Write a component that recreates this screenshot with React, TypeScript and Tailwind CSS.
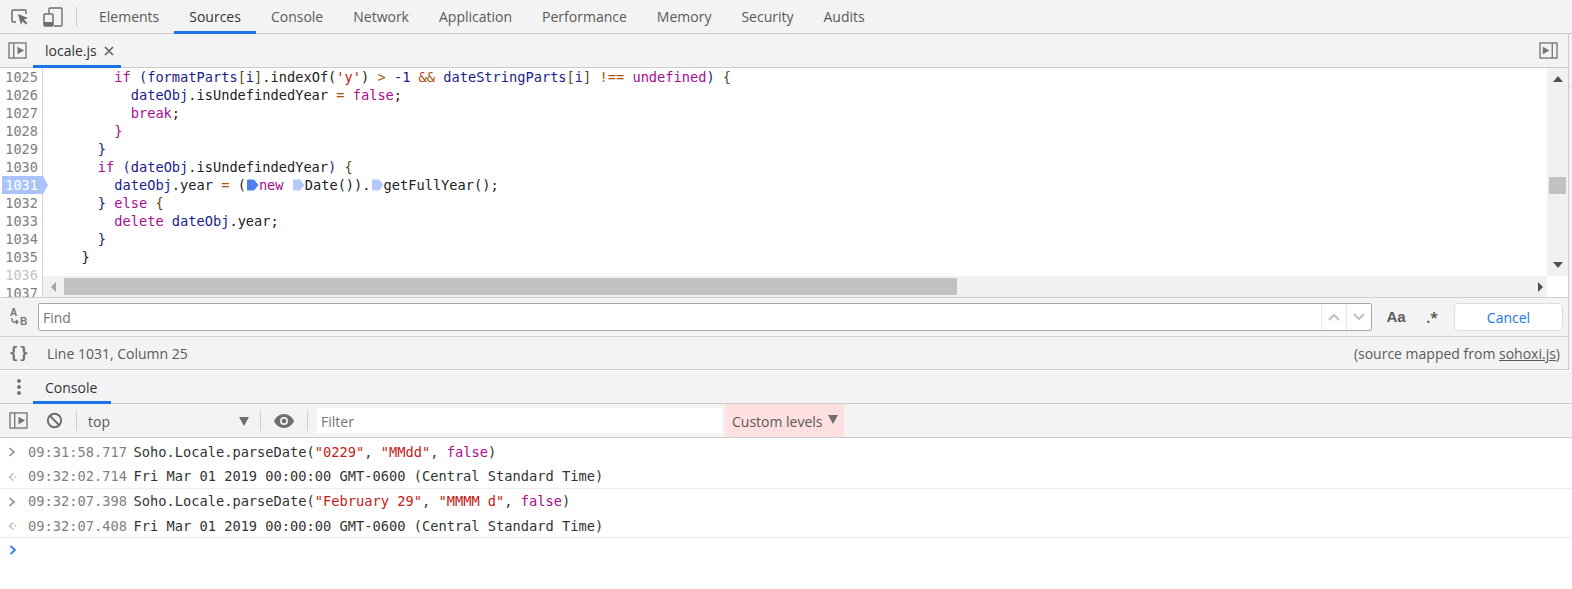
import type { ReactNode } from "react";

const SANS = "font-['Open_Sans',sans-serif]";
const MONO = "font-['DejaVu_Sans_Mono',monospace]";

const KW = "text-[#aa0d91]";
const VAR = "text-[#1c1c8c]";
const OP = "text-[#a8540e]";
const STR = "text-[#c41a16]";
const NUM = "text-[#1c1c8c]";
const PROP = "text-[#222222]";
const BR = "text-[#5c4a1e]";

function SidebarIcon({ flip }: { flip?: boolean }) {
  return (
    <svg width="19" height="17" viewBox="0 0 20 18" className="shrink-0">
      <rect x="1" y="1" width="18" height="16" fill="none" stroke="#757575" strokeWidth="1.4" />
      {flip ? (
        <>
          <line x1="14" y1="1" x2="14" y2="17" stroke="#757575" strokeWidth="1.4" />
          <path d="M4 5l7 4-7 4z" fill="#757575" />
        </>
      ) : (
        <>
          <line x1="6" y1="1" x2="6" y2="17" stroke="#757575" strokeWidth="1.4" />
          <path d="M10 5l7 4-7 4z" fill="#757575" />
        </>
      )}
    </svg>
  );
}

function InspectIcon() {
  return (
    <svg width="18" height="18" viewBox="0 0 18 18" className="shrink-0">
      <path d="M5 14H2a1 1 0 0 1-1-1V3a1 1 0 0 1 1-1h12a1 1 0 0 1 1 1v3" fill="none" stroke="#6e6e6e" strokeWidth="1.5" />
      <path d="M7 6l10 4-4 1.6 3.4 3.4-1.6 1.6-3.4-3.4L10 17z" fill="#6e6e6e" />
    </svg>
  );
}

function DeviceIcon() {
  return (
    <svg width="20" height="20" viewBox="0 0 20 20" className="shrink-0">
      <path d="M6 6V2a1 1 0 0 1 1-1h11a1 1 0 0 1 1 1v16a1 1 0 0 1-1 1h-7" fill="none" stroke="#6e6e6e" strokeWidth="1.4" />
      <rect x="1" y="7" width="9" height="12" rx="1" fill="none" stroke="#6e6e6e" strokeWidth="1.5" />
      <rect x="1" y="15" width="9" height="4" fill="#6e6e6e" />
    </svg>
  );
}

function Sep() {
  return <div className="w-px h-[20px] bg-[#cccccc] shrink-0" />;
}

function Marker({ dark }: { dark?: boolean }) {
  const fill = dark ? "#4f7df0" : "#b5c8fb";
  return (
    <svg width="13" height="12" viewBox="0 0 13 12" className="inline-block align-[-1px]">
      <path d="M1 1.5a1 1 0 0 1 1-1h6l4.500 5.500L8 11.500H2a1 1 0 0 1-1-1z" fill={fill} />
    </svg>
  );
}

const NAV_TABS = ["Elements", "Sources", "Console", "Network", "Application", "Performance", "Memory", "Security", "Audits"];

const CODE_LINES: { num: number; indent: number; tokens: ReactNode[] }[] = [
  {
    num: 1025,
    indent: 8,
    tokens: [
      <span key="a" className={KW}>if</span>,
      <span key="b" className={VAR}> (formatParts</span>,
      <span key="c" className={BR}>[</span>,
      <span key="d" className={VAR}>i</span>,
      <span key="e" className={BR}>]</span>,
      <span key="f" className={PROP}>.indexOf(</span>,
      <span key="g" className={STR}>'y'</span>,
      <span key="h" className={PROP}>) </span>,
      <span key="i" className={OP}>&gt;</span>,
      <span key="j" className={NUM}> -1 </span>,
      <span key="k" className={OP}>&amp;&amp;</span>,
      <span key="l" className={VAR}> dateStringParts</span>,
      <span key="m" className={BR}>[</span>,
      <span key="n" className={VAR}>i</span>,
      <span key="o" className={BR}>]</span>,
      <span key="p" className={OP}> !==</span>,
      <span key="q" className={KW}> undefined</span>,
      <span key="r" className={VAR}>) </span>,
      <span key="s" className={BR}>{"{"}</span>,
    ],
  },
  {
    num: 1026,
    indent: 10,
    tokens: [
      <span key="a" className={VAR}>dateObj</span>,
      <span key="b" className={PROP}>.isUndefindedYear </span>,
      <span key="c" className={OP}>=</span>,
      <span key="d" className={KW}> false</span>,
      <span key="e" className={PROP}>;</span>,
    ],
  },
  { num: 1027, indent: 10, tokens: [<span key="a" className={KW}>break</span>, <span key="b" className={PROP}>;</span>] },
  { num: 1028, indent: 8, tokens: [<span key="a" className={KW}>{"}"}</span>] },
  { num: 1029, indent: 6, tokens: [<span key="a" className={VAR}>{"}"}</span>] },
  {
    num: 1030,
    indent: 6,
    tokens: [
      <span key="a" className={KW}>if</span>,
      <span key="b" className={VAR}> (dateObj</span>,
      <span key="c" className={PROP}>.isUndefindedYear</span>,
      <span key="d" className={VAR}>) </span>,
      <span key="e" className={BR}>{"{"}</span>,
    ],
  },
  {
    num: 1031,
    indent: 8,
    tokens: [
      <span key="a" className={VAR}>dateObj</span>,
      <span key="b" className={PROP}>.year </span>,
      <span key="c" className={OP}>=</span>,
      <span key="d" className={PROP}> (</span>,
      <Marker key="e" dark />,
      <span key="f" className={KW}>new </span>,
      <Marker key="g" />,
      <span key="h" className={PROP}>Date()).</span>,
      <Marker key="i" />,
      <span key="j" className={PROP}>getFullYear();</span>,
    ],
  },
  {
    num: 1032,
    indent: 6,
    tokens: [
      <span key="a" className={VAR}>{"} "}</span>,
      <span key="b" className={KW}>else</span>,
      <span key="c" className={BR}>{" {"}</span>,
    ],
  },
  {
    num: 1033,
    indent: 8,
    tokens: [
      <span key="a" className={KW}>delete</span>,
      <span key="b" className={VAR}> dateObj</span>,
      <span key="c" className={PROP}>.year;</span>,
    ],
  },
  { num: 1034, indent: 6, tokens: [<span key="a" className={VAR}>{"}"}</span>] },
  { num: 1035, indent: 4, tokens: [<span key="a" className={PROP}>{"}"}</span>] },
];

function ConsoleRow({ kind, time, border, children }: { kind: "in" | "out"; time: string; border?: boolean; children: ReactNode }) {
  return (
    <div className={`flex items-center pt-[2px] ${MONO} text-[13.7px] text-[#333333] whitespace-pre ${border ? "h-[25px] border-b border-[#ededed]" : "h-[24.5px]"}`}>
      <div className="w-[28px] flex justify-start pl-[8px] shrink-0">
        {kind === "in" ? (
          <svg width="8" height="10" viewBox="0 0 8 10">
            <path d="M1.500 1l4.500 4-4.500 4" fill="none" stroke="#8a8a8a" strokeWidth="1.600" />
          </svg>
        ) : (
          <svg width="9" height="10" viewBox="0 0 9 10">
            <path d="M5.500 1.500L1.500 5l4 3.500" fill="none" stroke="#bdbdbd" strokeWidth="1.500" />
            <circle cx="7.500" cy="5" r="1" fill="#bdbdbd" />
          </svg>
        )}
      </div>
      <span className="text-[#808080] w-[105.500px] shrink-0">{time}</span>
      <span>{children}</span>
    </div>
  );
}

export default function App() {
  return (
    <div className={`w-[1572px] h-[589px] overflow-hidden flex flex-col bg-white text-[14px] text-[#5a5a5a] ${SANS}`}>
      {/* top nav */}
      <div className="h-[34px] shrink-0 flex items-stretch bg-[#f3f3f3] border-b border-[#cccccc]">
        <div className="flex items-center pl-[11px] gap-[14px] w-[76px] shrink-0">
          <InspectIcon />
          <DeviceIcon />
        </div>
        <div className="flex items-center">
          <Sep />
        </div>
        <div className="flex ml-[7px]">
          {NAV_TABS.map((tab) => (
            <div
              key={tab}
              className={`px-[15px] flex items-center border-b-[3px] pt-[1px] -mb-px ${tab === "Sources" ? "border-[#1a73e8] text-[#333333]" : "border-transparent"}`}
            >
              {tab}
            </div>
          ))}
        </div>
      </div>

      {/* sources panel */}
      <div className="h-[336px] shrink-0 flex">
        <div className="flex-1 min-w-0 flex flex-col">
          {/* file tabs */}
          <div className="h-[34px] shrink-0 flex items-stretch bg-[#f3f3f3] border-b border-[#cccccc]">
            <div className="w-[33px] flex items-center justify-center pl-[2px] shrink-0">
              <SidebarIcon />
            </div>
            <div className="w-[88px] flex items-center pl-[12px] gap-[7px] border-b-[3px] border-[#1a73e8] -mb-px pt-[2px] text-[#333333]">
              locale.js
              <svg width="10" height="10" viewBox="0 0 10 10">
                <path d="M1 1l8 8M9 1l-8 8" stroke="#666666" strokeWidth="1.700" />
              </svg>
            </div>
            <div className="flex-1" />
            <div className="w-[29px] flex items-center justify-start shrink-0">
              <SidebarIcon flip />
            </div>
          </div>

          {/* editor */}
          <div className="h-[229px] shrink-0 flex overflow-hidden">
            <div className={`w-[43px] shrink-0 border-r border-[#d4d4d4] ${MONO} text-[13.6px] leading-[18px] text-[#808080]`}>
              {CODE_LINES.map((line) => (
                <div key={line.num} className="h-[18px] relative pr-[4px] text-right">
                  {line.num === 1031 && (
                    <svg width="46" height="18" viewBox="0 0 46 18" className="absolute left-[2px] top-0">
                      <path d="M0 0h41l5 9-5 9H0z" fill="#aac4fb" />
                    </svg>
                  )}
                  <span className={`relative ${line.num === 1031 ? "text-white" : ""}`}>{line.num}</span>
                </div>
              ))}
              <div className="pr-[4px] text-right text-[#c4c4c4]">1036</div>
              <div className="pr-[4px] text-right">1037</div>
            </div>
            <div className="flex-1 min-w-0 flex flex-col">
              <div className={`flex-1 min-h-0 pl-[5.5px] ${MONO} text-[13.66px] leading-[18px] whitespace-pre`}>
                {CODE_LINES.map((line) => (
                  <div key={line.num} className="h-[18px]">
                    {" ".repeat(line.indent)}
                    {line.tokens}
                  </div>
                ))}
              </div>
              <div className="h-[21px] shrink-0 flex items-center bg-[#f1f1f1]">
                <div className="w-[21px] flex justify-center shrink-0">
                  <svg width="6" height="10" viewBox="0 0 6 10">
                    <path d="M5 0v10L0 5z" fill="#a3a3a3" />
                  </svg>
                </div>
                <div className="w-[893px] h-[17px] bg-[#c1c1c1] shrink-0" />
                <div className="flex-1" />
                <div className="w-[21px] flex justify-center shrink-0 -mr-[3px]">
                  <svg width="6" height="10" viewBox="0 0 6 10">
                    <path d="M1 0v10l5-5z" fill="#505050" />
                  </svg>
                </div>
              </div>
            </div>
            <div className="w-[21px] shrink-0 flex flex-col">
              <div className="flex-1 flex flex-col items-center bg-[#f1f1f1]">
                <svg width="10" height="6" viewBox="0 0 10 6" className="mt-[8px]">
                  <path d="M0 6h10L5 0z" fill="#505050" />
                </svg>
                <div className="w-[17px] h-[17px] bg-[#c1c1c1] mt-[95px]" />
                <div className="flex-1" />
                <svg width="10" height="6" viewBox="0 0 10 6" className="mb-[8px]">
                  <path d="M0 0h10L5 6z" fill="#505050" />
                </svg>
              </div>
              <div className="h-[21px] bg-white shrink-0" />
            </div>
          </div>

          {/* find bar */}
          <div className="h-[40px] shrink-0 flex items-center bg-[#f3f3f3] border-y border-[#d0d0d0]">
            <div className="w-[38px] flex justify-center shrink-0">
              <svg width="20" height="20" viewBox="0 0 20 20">
                <text x="1" y="9" fontSize="10" fontWeight="700" fill="#757575" fontFamily="Liberation Sans">A</text>
                <text x="11" y="18" fontSize="10" fontWeight="700" fill="#757575" fontFamily="Liberation Sans">B</text>
                <path d="M3 11v2.500a1.500 1.500 0 0 0 1.500 1.500H9M7 13l2 2-2 2" fill="none" stroke="#757575" strokeWidth="1.300" />
              </svg>
            </div>
            <div className="w-[1334px] h-[28px] shrink-0 flex items-stretch bg-white border border-[#a9a9a9] rounded-[2px]">
              <div className="flex-1 pl-[4px] pt-[1px] flex items-center text-[#757575]">Find</div>
              <div className="w-[25px] flex items-center justify-center border-l border-[#e8e8e8]">
                <svg width="12" height="8" viewBox="0 0 12 8">
                  <path d="M1 7l5-5 5 5" fill="none" stroke="#c2c2c2" strokeWidth="2.200" />
                </svg>
              </div>
              <div className="w-[25px] flex items-center justify-center border-l border-[#e8e8e8]">
                <svg width="12" height="8" viewBox="0 0 12 8">
                  <path d="M1 1l5 5 5-5" fill="none" stroke="#c2c2c2" strokeWidth="2.200" />
                </svg>
              </div>
            </div>
            <div className="w-[48px] text-center font-bold text-[15px] text-[#5a5a5a] font-['Liberation_Sans',sans-serif] shrink-0">Aa</div>
            <div className="w-[24px] text-center font-bold text-[#5a5a5a] shrink-0">.*</div>
            <div className="w-[109px] h-[28px] ml-[10px] shrink-0 flex items-center justify-center pt-[1px] bg-white border border-[#dddddd] rounded-[4px] text-[#1a73e8]">
              Cancel
            </div>
          </div>

          {/* status bar */}
          <div className="h-[33px] shrink-0 flex items-center justify-between pt-[1px] bg-[#f3f3f3] border-b border-[#cccccc] pr-[8px]">
            <div className="flex items-center">
              <div className="w-[47px] pl-[9px] shrink-0 font-bold text-[15.5px] text-[#6e6e6e] font-['DejaVu_Sans_Mono',monospace] tracking-[1px]">{"{}"}</div>
              <span>Line 1031, Column 25</span>
            </div>
            <div>
              (source mapped from <span className="underline">sohoxi.js</span>)
            </div>
          </div>
        </div>

        {/* collapsed sidebar sliver */}
        <div className="w-[4px] shrink-0 bg-[#f3f3f3] border-l border-[#cccccc] flex flex-col">
          <div className="h-[53px] border-b border-[#d8d8d8]" />
        </div>
      </div>

      {/* console tab */}
      <div className="h-[34px] shrink-0 flex items-stretch bg-[#f3f3f3] border-y border-[#cccccc] border-t-white">
        <div className="w-[33px] flex items-center justify-center pl-[4px] shrink-0">
          <svg width="4" height="18" viewBox="0 0 4 18">
            <circle cx="2" cy="3" r="2" fill="#757575" />
            <circle cx="2" cy="9" r="2" fill="#757575" />
            <circle cx="2" cy="15" r="2" fill="#757575" />
          </svg>
        </div>
        <div className="w-[78px] flex items-center pl-[12px] border-b-[3px] border-[#1a73e8] -mb-px pt-[3px] text-[#333333]">Console</div>
      </div>

      {/* console toolbar */}
      <div className="h-[34px] shrink-0 flex items-center bg-[#f3f3f3] border-b border-[#cccccc]">
        <div className="w-[36px] flex justify-center shrink-0">
          <SidebarIcon />
        </div>
        <div className="w-[36px] flex justify-center shrink-0">
          <svg width="17" height="17" viewBox="0 0 17 17">
            <circle cx="8.500" cy="8.500" r="6.700" fill="none" stroke="#6e6e6e" strokeWidth="2" />
            <path d="M4 4l9 9" stroke="#6e6e6e" strokeWidth="2" />
          </svg>
        </div>
        <div className="ml-[4px]">
          <Sep />
        </div>
        <div className="w-[183px] pl-[11px] pr-[11px] pt-[1px] flex items-center justify-between shrink-0">
          <span>top</span>
          <svg width="10" height="9" viewBox="0 0 10 9">
            <path d="M0 0h10L5 9z" fill="#6e6e6e" />
          </svg>
        </div>
        <Sep />
        <div className="w-[46px] flex justify-center shrink-0">
          <svg width="20" height="14" viewBox="0 0 20 14">
            <path d="M10 0C5.500 0 1.800 2.900 0 7c1.800 4.100 5.500 7 10 7s8.200-2.900 10-7c-1.800-4.100-5.500-7-10-7z" fill="#6e6e6e" />
            <circle cx="10" cy="7" r="4" fill="#f3f3f3" />
            <circle cx="10" cy="7" r="2.300" fill="#6e6e6e" />
          </svg>
        </div>
        <Sep />
        <div className="w-[405px] h-[25px] ml-[9px] shrink-0 bg-white flex items-center pl-[4px] pt-[1px] text-[#757575]">Filter</div>
        <div className="w-[119px] h-[33px] ml-[3px] shrink-0 bg-[#ffe0e0] flex items-center pl-[7px] pt-[1px] gap-[5px]">
          Custom levels
          <svg width="10" height="9" viewBox="0 0 10 9" className="-mt-[3px]">
            <path d="M0 0h10L5 9z" fill="#6e6e6e" />
          </svg>
        </div>
      </div>

      {/* messages */}
      <div className="flex-1 min-h-0 pt-[1px]">
        <ConsoleRow kind="in" time="09:31:58.717">
          Soho.Locale.parseDate(<span className={STR}>"0229"</span>, <span className={STR}>"MMdd"</span>, <span className={KW}>false</span>)
        </ConsoleRow>
        <ConsoleRow kind="out" time="09:32:02.714" border>
          Fri Mar 01 2019 00:00:00 GMT-0600 (Central Standard Time)
        </ConsoleRow>
        <ConsoleRow kind="in" time="09:32:07.398">
          Soho.Locale.parseDate(<span className={STR}>"February 29"</span>, <span className={STR}>"MMMM d"</span>, <span className={KW}>false</span>)
        </ConsoleRow>
        <ConsoleRow kind="out" time="09:32:07.408" border>
          Fri Mar 01 2019 00:00:00 GMT-0600 (Central Standard Time)
        </ConsoleRow>
        <div className="h-[24px] flex items-center pl-[9px]">
          <svg width="8" height="10" viewBox="0 0 8 10">
            <path d="M1.500 1l4.500 4-4.500 4" fill="none" stroke="#367cf1" strokeWidth="1.800" />
          </svg>
        </div>
      </div>
    </div>
  );
}
